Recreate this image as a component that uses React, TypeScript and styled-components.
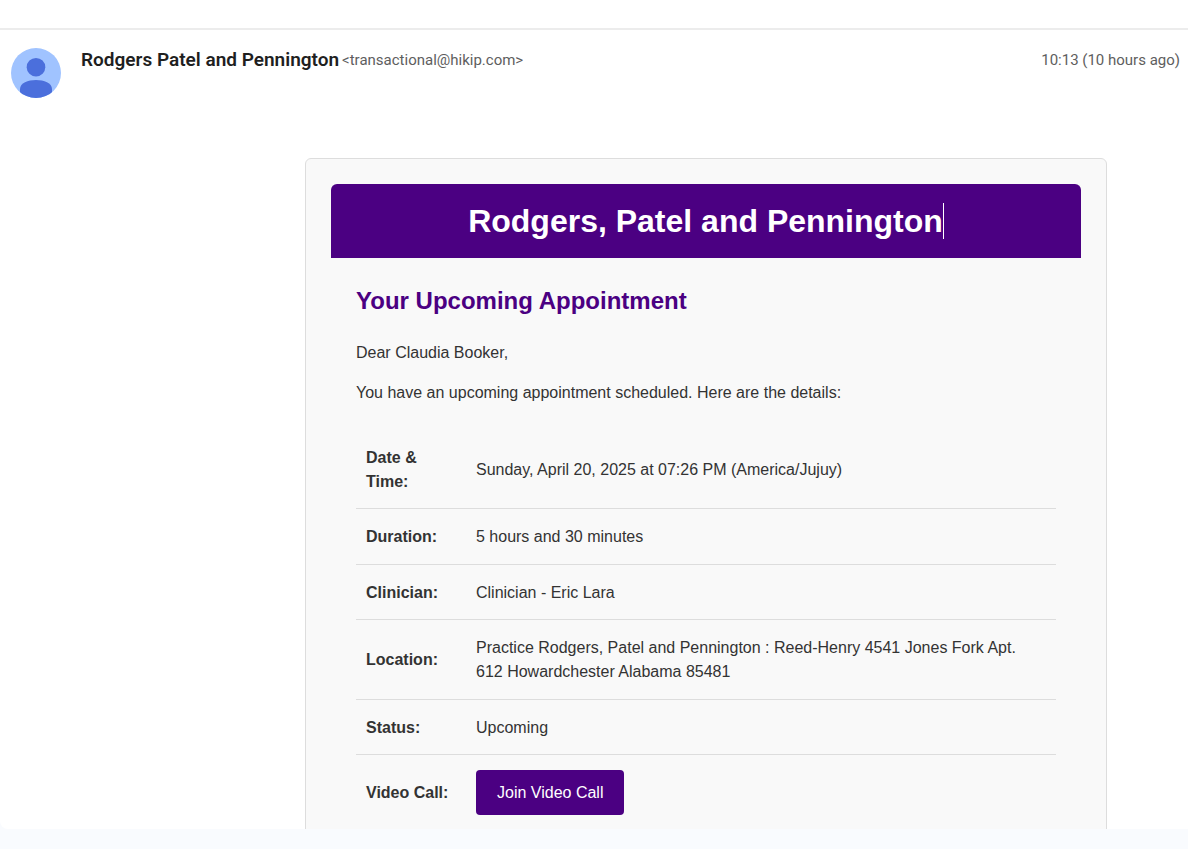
import React from "react";
import styled, { createGlobalStyle } from "styled-components";

const purple = "#4b0082";

const GlobalStyle = createGlobalStyle`
  * { box-sizing: border-box; }
  body {
    margin: 0;
    background: #f9fbfe;
    color: #333;
    font: 16px/24px "Liberation Sans", Arial, sans-serif;
  }
`;

const Page = styled.div`
  display: flex;
  flex-direction: column;
  height: 100vh;
  padding-bottom: 20px;
`;

const Panel = styled.main`
  flex: 1;
  min-height: 0;
  overflow-y: auto;
  scrollbar-width: none;
  background: #fff;
  border-bottom-left-radius: 8px;
`;

const TopBar = styled.div`
  height: 30px;
  border-bottom: 2px solid #ececec;
`;

const MessageHeader = styled.header`
  display: flex;
  align-items: flex-start;
  padding: 18px 8px 0 11px;
  font-family: Roboto, sans-serif;
`;

const Avatar = styled.svg`
  flex: none;
  width: 50px;
  height: 50px;
  margin-right: 20px;
`;

const Sender = styled.div`
  flex: 1;
  display: flex;
  flex-wrap: wrap;
  align-items: center;
  gap: 3px;
`;

const SenderName = styled.span`
  color: #1f1f1f;
  font-size: 19px;
  font-weight: 600;
`;

const Muted = styled.span`
  color: #5e5e5e;
  font-size: 15px;
`;

const MessageBody = styled.section`
  padding: 60px 0 40px 224px;
`;

const Card = styled.article`
  max-width: 802px;
  margin: 0 auto;
  padding: 25px;
  background: #f9f9f9;
  border: 1px solid #ddd;
  border-radius: 6px;
`;

const Banner = styled.div`
  padding: 13px 25px;
  background: ${purple};
  border-radius: 6px 6px 0 0;
  text-align: center;
`;

const Title = styled.h1`
  display: flex;
  justify-content: center;
  margin: 0;
  color: #fff;
  font-size: 32px;
  line-height: 48px;
`;

const Caret = styled.span`
  width: 1px;
  height: 36px;
  margin-top: 6px;
  background: #fff;
`;

const Content = styled.div`
  padding: 25px;
`;

const Subtitle = styled.h2`
  margin: 0 0 22px;
  color: ${purple};
  font-size: 24px;
  line-height: 36px;
`;

const Paragraph = styled.p`
  margin: 0 0 16px;
`;

const Details = styled.table`
  width: 100%;
  margin-top: 25px;
  border-spacing: 0;

  th, td {
    padding: 16px 10px 14px;
    border-bottom: 1px solid #ddd;
    text-align: left;
    vertical-align: middle;
  }
  th { width: 110px; }
  tr:nth-child(even) > * { padding-bottom: 15px; }
  tr:last-child > * {
    padding-top: 15px;
    border-bottom: 0;
  }
`;

const JoinButton = styled.button`
  display: block;
  padding: 0 21px;
  border: 0;
  border-radius: 4px;
  background: ${purple};
  color: #fff;
  font: inherit;
  line-height: 45px;
  cursor: pointer;
`;

const details: { label: string; value: React.ReactNode }[] = [
  { label: "Date & Time:", value: "Sunday, April 20, 2025 at 07:26 PM (America/Jujuy)" },
  { label: "Duration:", value: "5 hours and 30 minutes" },
  { label: "Clinician:", value: "Clinician - Eric Lara" },
  {
    label: "Location:",
    value:
      "Practice Rodgers, Patel and Pennington : Reed-Henry 4541 Jones Fork Apt. 612 Howardchester Alabama 85481",
  },
  { label: "Status:", value: "Upcoming" },
  { label: "Video Call:", value: <JoinButton type="button">Join Video Call</JoinButton> },
];

export default function App() {
  return (
    <Page>
      <GlobalStyle />
      <Panel>
        <TopBar />
        <MessageHeader>
          <Avatar viewBox="0 0 50 50" aria-hidden="true">
            <clipPath id="disc">
              <circle cx="25" cy="25" r="25" />
            </clipPath>
            <g clipPath="url(#disc)">
              <rect width="50" height="50" fill="#a0c3ff" />
              <circle cx="25" cy="19.2" r="9.3" fill="#4b6fdc" />
              <path d="M9 50V41C9 35 17 32 25 32S41 35 41 41V50Z" fill="#4b6fdc" />
            </g>
          </Avatar>
          <Sender>
            <SenderName>Rodgers Patel and Pennington</SenderName>
            <Muted>&lt;transactional@hikip.com&gt;</Muted>
          </Sender>
          <Muted>10:13 (10 hours ago)</Muted>
        </MessageHeader>
        <MessageBody>
          <Card>
            <Banner>
              <Title>
                Rodgers, Patel and Pennington
                <Caret />
              </Title>
            </Banner>
            <Content>
              <Subtitle>Your Upcoming Appointment</Subtitle>
              <Paragraph>Dear Claudia Booker,</Paragraph>
              <Paragraph>You have an upcoming appointment scheduled. Here are the details:</Paragraph>
              <Details>
                <tbody>
                  {details.map((row) => (
                    <tr key={row.label}>
                      <th scope="row">{row.label}</th>
                      <td>{row.value}</td>
                    </tr>
                  ))}
                </tbody>
              </Details>
            </Content>
          </Card>
        </MessageBody>
      </Panel>
    </Page>
  );
}
